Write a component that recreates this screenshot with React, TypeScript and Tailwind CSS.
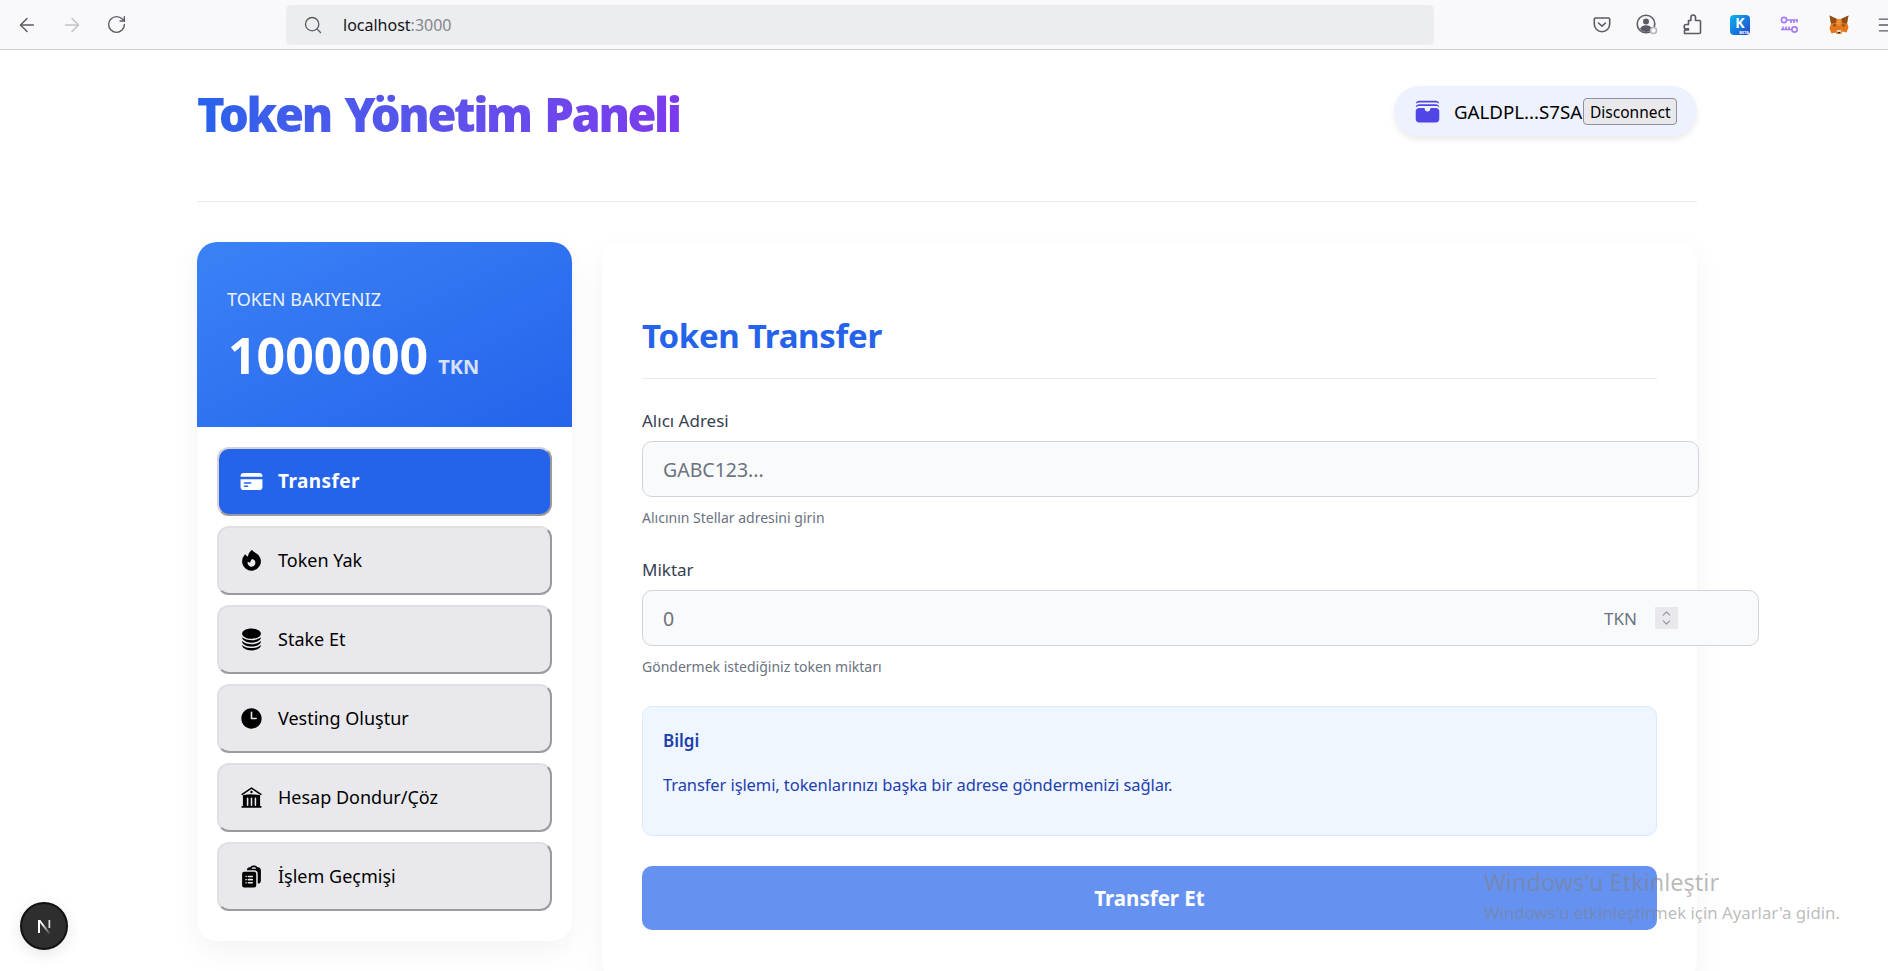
import React from "react";
import { ArrowLeft, ArrowRight, RotateCw, Search, ChevronUp, ChevronDown, Menu } from "lucide-react";
import { HiWallet, HiCreditCard, HiFire, HiCircleStack, HiClock, HiBuildingLibrary, HiClipboardDocumentList } from "react-icons/hi2";

const nav = [
  { label: "Transfer", Icon: HiCreditCard, active: true },
  { label: "Token Yak", Icon: HiFire },
  { label: "Stake Et", Icon: HiCircleStack },
  { label: "Vesting Oluştur", Icon: HiClock },
  { label: "Hesap Dondur/Çöz", Icon: HiBuildingLibrary },
  { label: "İşlem Geçmişi", Icon: HiClipboardDocumentList },
];

function Pocket() {
  return (
    <svg width="18" height="18" viewBox="0 0 18 18" fill="none" stroke="#5b5b66" strokeWidth="1.6">
      <path d="M2.5 2h13a1.2 1.2 0 0 1 1.2 1.2V8a7.7 7.7 0 0 1-15.4 0V3.2A1.2 1.2 0 0 1 2.5 2z" />
      <path d="M5.5 7l3.5 3.2L12.5 7" strokeLinecap="round" strokeLinejoin="round" />
    </svg>
  );
}
function Profile() {
  return (
    <svg width="24" height="24" viewBox="0 0 24 24" fill="none">
      <circle cx="11" cy="11" r="8.8" stroke="#5b5b66" strokeWidth="1.6" />
      <circle cx="11" cy="8.6" r="3" fill="#5b5b66" />
      <path d="M5 16c1-3 3.5-3.8 6-3.8s5 .8 6 3.8c-1.5 1.8-3.7 3-6 3s-4.500-1.200-6-3z" fill="#5b5b66" />
      <circle cx="18.500" cy="17.500" r="3" fill="#f9f9fb" stroke="#b5b5bb" strokeWidth="1.500" />
    </svg>
  );
}
function Puzzle() {
  return (
    <svg width="19" height="21" viewBox="0 0 19 21" fill="none" stroke="#5b5b66" strokeWidth="1.6" strokeLinejoin="round">
      <path d="M1.500 19.500h15a1 1 0 0 0 1-1V7.500a1 1 0 0 0-1-1h-4V3.300a2.300 2.300 0 0 0-4.600 0v3.200H5.500v4H3.300a2.200 2.200 0 0 0 0 4.400h2.200V16H1.500z" />
    </svg>
  );
}
function KLogo() {
  return (
    <div className="relative flex h-5 w-5 items-center justify-center rounded-[4px] bg-linear-to-br from-[#0bb4f0] to-[#2440c8] text-[14px] leading-none font-bold text-white">
      <span className="-mt-[3px]">K</span>
      <span className="absolute right-[1px] bottom-0 text-[4px] leading-[5px] font-bold text-white">BETA</span>
    </div>
  );
}
function Keys() {
  return (
    <svg width="19" height="18" viewBox="0 0 19 18" fill="none" stroke="#a67cf5" strokeWidth="1.700">
      <circle cx="4" cy="4" r="2.600" />
      <path d="M6.600 4H18M11 4v3M14 4v3M17 4v2.500" />
      <circle cx="14.500" cy="13.500" r="2.600" />
      <path d="M12 13.500H1M3 13.500v-3M6 13.500v-3M9 13.500v-3" />
    </svg>
  );
}
function Fox() {
  return (
    <svg width="20" height="20" viewBox="0 0 20 20">
      <path d="M0.500 0.500L8 4h4l7.500-3.500-1.500 7 1.500 5-2 5-4-1-1.500 2.500h-4L6.500 17.500l-4 1-2-5 1.500-5z" fill="#e2761b" />
      <path d="M0.500 0.500L8 4 7 8 2 8.500z M19.500 0.500L12 4l1 4 5 .5z" fill="#8e4f1c" />
      <path d="M8 4h4l1 4-3 3-3-3z" fill="#f0902f" />
      <path d="M3.500 10l3.500-1-1 3z M16.500 10L13 9l1 3z" fill="#7a4a1e" />
      <path d="M7.500 15h5l-1 2.500h-3z" fill="#e4d5c5" />
      <path d="M8.800 17h2.400l-.4 1.300H9.200z" fill="#222" />
    </svg>
  );
}
function NextMark() {
  return (
    <svg width="19" height="19" viewBox="0 0 19 19" fill="none">
      <defs>
        <linearGradient id="nGrad" x1="9" y1="6" x2="16" y2="17" gradientUnits="userSpaceOnUse">
          <stop stopColor="#fff" />
          <stop offset="1" stopColor="#fff" stopOpacity="0" />
        </linearGradient>
      </defs>
      <path d="M3 3h2v13H3z" fill="#fff" />
      <path d="M3 3h2.300L16 17h-2.500z" fill="url(#nGrad)" />
      <path d="M13.500 3h1.700v8h-1.700z" fill="#fff" fillOpacity=".85" />
    </svg>
  );
}

export default function App() {
  return (
    <div className="relative h-[971px] overflow-hidden bg-white font-['Noto_Sans',sans-serif] text-black">
      <div className="flex h-[50px] items-center border-b border-[#cfcfd1] bg-[#f9f9fb]">
        <div className="ml-[16px] flex items-center gap-[23px]">
          <ArrowLeft size={22} strokeWidth={1.6} className="text-[#5b5b66]" />
          <ArrowRight size={22} strokeWidth={1.6} className="text-[#c3c3c8]" />
          <RotateCw size={21} strokeWidth={1.6} className="text-[#5b5b66]" />
        </div>
        <div className="ml-[159px] flex h-10 w-[1148px] shrink-0 items-center rounded-[5px] bg-[#ecedef] pl-[17px]">
          <Search size={20} strokeWidth={1.6} className="text-[#5b5b66]" />
          <span className="ml-[20px] text-[16px] text-[#15141a]">
            localhost<span className="text-[#86868c]">:3000</span>
          </span>
        </div>
        <div className="ml-[159px] flex shrink-0 items-center">
          <Pocket />
          <div className="ml-[24px]"><Profile /></div>
          <div className="ml-[24px]"><Puzzle /></div>
          <div className="ml-[28px]"><KLogo /></div>
          <div className="ml-[30px]"><Keys /></div>
          <div className="ml-[30px]"><Fox /></div>
          <Menu size={20} strokeWidth={1.6} className="ml-[27px] shrink-0 text-[#5b5b66]" />
        </div>
      </div>

      <div className="ml-[197px] w-[1500px]">
        <header className="flex h-[152px] items-start justify-between border-b border-[#e9eaec]">
          <h1 className="mt-[24px] bg-linear-to-r from-[#2563eb] to-[#7c3aed] bg-clip-text text-[47px] leading-[80px] font-black tracking-[-2.45px] text-transparent [word-spacing:4px]">
            Token Yönetim Paneli
          </h1>
          <div className="mt-[36px] flex h-[50px] w-[303px] items-center rounded-full bg-[#eef2ff] pl-[19px] shadow-[0_4px_6px_rgba(0,0,0,0.08)]">
            <HiWallet size={29} className="shrink-0 text-[#4f46e5]" />
            <span className="mt-[3px] ml-[12px] text-[18.7px] whitespace-nowrap">GALDPL...S7SA</span>
            <button className="mt-[1px] ml-[1px] h-[27px] w-[94px] shrink-0 rounded-[4px] border border-[#8f8f9d] bg-[#e9e9ed] pt-[2px] text-[15.5px] leading-none whitespace-nowrap">
              Disconnect
            </button>
          </div>
        </header>

        <div className="mt-[40px] flex items-start gap-[30px]">
          <aside className="w-[375px] shrink-0 overflow-hidden rounded-[20px] bg-white shadow-[0_10px_30px_rgba(0,0,0,0.05)]">
            <div className="h-[185px] bg-linear-to-br from-[#3b82f6] to-[#2563eb] pt-[44px] pl-[30px] text-white">
              <div className="text-[18px] leading-[27px] text-white/90">TOKEN BAKIYENIZ</div>
              <div className="mt-[11px] ml-[1px] flex items-baseline">
                <span className="text-[50px] leading-[62px] font-bold">1000000</span>
                <span className="ml-[10px] text-[20px] font-bold text-white/80">TKN</span>
              </div>
            </div>
            <nav className="flex flex-col gap-[10px] px-[20px] pt-[20px] pb-[30px]">
              {nav.map(({ label, Icon, active }) => (
                <button
                  key={label}
                  className={
                    active
                      ? "flex h-[69px] items-center rounded-[12px] border-2 border-t-[#d4d4d8] border-r-[#9a9a9f] border-b-[#9a9a9f] border-l-[#d4d4d8] bg-[#2563eb] pl-[20px] text-[19px] font-bold tracking-[0.4px] text-white"
                      : "flex h-[69px] items-center rounded-[12px] border-2 border-t-[#e0e0e4] border-r-[#9a9a9f] border-b-[#9a9a9f] border-l-[#e0e0e4] bg-[#e9e9ed] pl-[20px] text-[18px] text-black"
                  }
                >
                  <Icon size={25} className="shrink-0" />
                  <span className="ml-[14px]">{label}</span>
                </button>
              ))}
            </nav>
          </aside>

          <main className="h-[740px] w-[1095px] shrink-0 rounded-[20px] bg-white px-[40px] pt-[66px] shadow-[0_10px_30px_rgba(0,0,0,0.05)]">
            <h2 className="border-b border-[#e9eaec] pb-[14px] text-[33px] leading-[56px] font-bold tracking-[-0.3px] text-[#2563eb]">Token Transfer</h2>

            <div className="mt-[30px]">
              <label className="block text-[17px] leading-[24px] text-[#374151]">Alıcı Adresi</label>
              <input
                placeholder="GABC123..."
                className="mt-[8px] h-[56px] w-[1057px] rounded-[10px] border border-[#d1d5db] bg-[#f9fafb] px-[20px] text-[19.5px] outline-none placeholder:text-[#6b7280]"
              />
              <p className="mt-[11px] text-[14px] leading-[20px] text-[#6b7280]">Alıcının Stellar adresini girin</p>
            </div>

            <div className="mt-[30px]">
              <label className="block text-[17px] leading-[24px] text-[#374151]">Miktar</label>
              <div className="relative mt-[8px] h-[56px]">
                <input
                  placeholder="0"
                  className="h-[56px] w-[1117px] rounded-[10px] border border-[#d1d5db] bg-[#f9fafb] px-[20px] text-[19.5px] outline-none placeholder:text-[#6b7280]"
                />
                <span className="absolute top-[15px] right-[20px] text-[17px] leading-[27px] text-[#6b7280]">TKN</span>
                <span className="absolute top-[17px] left-[1013px] flex h-[22px] w-[23px] flex-col items-center justify-center bg-[#e9e9ed] text-[#8f8f9d]">
                  <ChevronUp size={13} strokeWidth={2} className="-mb-[2px]" />
                  <ChevronDown size={13} strokeWidth={2} className="-mt-[2px]" />
                </span>
              </div>
              <p className="mt-[11px] text-[14px] leading-[20px] text-[#6b7280]">Göndermek istediğiniz token miktarı</p>
            </div>

            <div className="mt-[29px] h-[130px] rounded-[10px] border border-[#dbeafe] bg-[#eff6ff] px-[20px] pt-[22px]">
              <div className="text-[17px] leading-[24px] font-semibold text-[#1e40af]">Bilgi</div>
              <p className="mt-[20px] text-[16.5px] leading-[24px] tracking-[-0.09px] text-[#1e40af]">Transfer işlemi, tokenlarınızı başka bir adrese göndermenizi sağlar.</p>
            </div>

            <button className="mt-[30px] h-[64px] w-full rounded-[10px] bg-[#6592f1] text-[20.5px] font-bold text-white">Transfer Et</button>
          </main>
        </div>
      </div>

      <div className="absolute top-[868px] left-[1484px] whitespace-nowrap text-[#80808088]">
        <div className="text-[23.5px] leading-[28px]">Windows'u Etkinleştir</div>
        <div className="mt-[4px] text-[16.8px] leading-[26px]">Windows'u etkinleştirmek için Ayarlar'a gidin.</div>
      </div>

      <div className="absolute top-[902px] left-[20px] flex h-[48px] w-[48px] items-center justify-center rounded-full border-2 border-[#111] bg-[#2e2e2e] shadow-[0_4px_16px_rgba(0,0,0,0.1)]">
        <NextMark />
      </div>
    </div>
  );
}
